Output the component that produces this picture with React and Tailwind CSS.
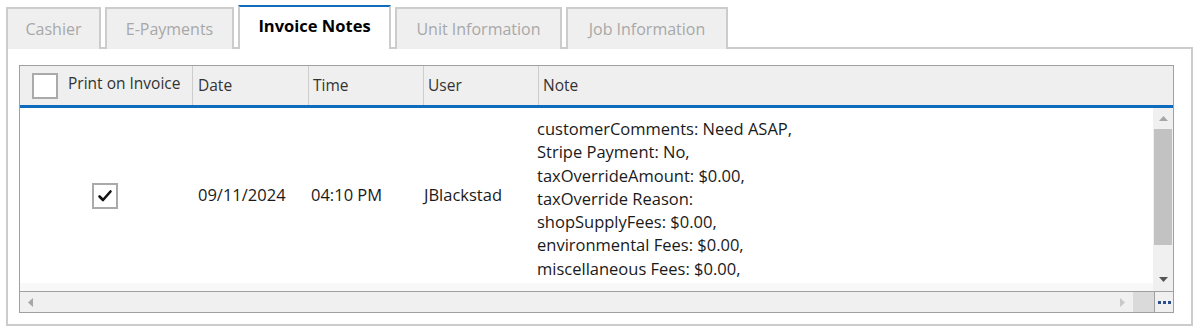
const tabs = [
  { label: 'Cashier', w: 'w-[95px]' },
  { label: 'E-Payments', w: 'w-[129px]' },
  { label: 'Invoice Notes', w: 'w-[153px]', active: true },
  { label: 'Unit Information', w: 'w-[167px]' },
  { label: 'Job Information', w: 'w-[162px]' },
]

const noteLines = [
  'customerComments: Need ASAP,',
  'Stripe Payment: No,',
  'taxOverrideAmount: $0.00,',
  'taxOverride Reason:',
  'shopSupplyFees: $0.00,',
  'environmental Fees: $0.00,',
  'miscellaneous Fees: $0.00,',
]

const Tab = ({ label, w, active }) => {
  if (active) {
    return (
      <div
        className={`${w} h-[44px] relative z-10 -mb-[2px] flex items-center justify-center pb-[4px] bg-white border-x-2 border-t-2 border-x-[#cccccc] border-t-[#0f6cbd] text-black font-bold text-[16.5px]`}
      >
        {label}
      </div>
    )
  }
  return (
    <div
      className={`${w} h-[42px] relative z-10 -mb-[2px] flex items-center justify-center bg-[#efefef] border-x-2 border-t-2 border-[#cccccc] text-[#a8a8a8] text-[16px]`}
    >
      {label}
    </div>
  )
}

const Box = ({ checked, className = '' }) => (
  <div className={`w-[26px] h-[26px] border-2 border-[#aaaaaa] bg-white flex items-center justify-center ${className}`}>
    {checked && (
      <svg width="16" height="14" viewBox="0 0 16 14">
        <path d="M2.5 7.5 L6 11 L13.5 2.5" fill="none" stroke="#111" strokeWidth="2.6" strokeLinecap="round" strokeLinejoin="round" />
      </svg>
    )}
  </div>
)

export default function App() {
  return (
    <div className="w-[1199px] h-[330px] bg-white pl-[6px] text-[#1a1a1a]" style={{ fontFamily: '"Open Sans", "Noto Sans", sans-serif' }}>
      {/* tab strip */}
      <div className="flex items-end gap-[4px] h-[47px]">
        {tabs.map(t => (
          <Tab key={t.label} {...t} />
        ))}
      </div>

      {/* tab page */}
      <div className="w-[1187px] h-[279px] border-2 border-[#cccccc] pt-[16px] pl-[11px] pr-[17px]">
        <div className="h-[248px] border border-[#a0a0a0] flex flex-col bg-[#f8f8f8]">
          {/* header */}
          <div className="h-[42px] shrink-0 flex bg-[#efefef] border-b-[3px] border-[#0f6cbd] text-[#333] text-[15.5px]">
            <div className="w-[173px] border-r border-[#cccccc] flex items-center pl-[12px] gap-[10px]">
              <Box className="mt-[1px]" />
              <span className="-mt-[3px]">Print on Invoice</span>
            </div>
            <div className="w-[116px] border-r border-[#cccccc] flex items-center pl-[5px]">Date</div>
            <div className="w-[115px] border-r border-[#cccccc] flex items-center pl-[4px]">Time</div>
            <div className="w-[115px] border-r border-[#cccccc] flex items-center pl-[4px]">User</div>
            <div className="flex-1 flex items-center pl-[4px]">Note</div>
          </div>

          {/* body */}
          <div className="flex-1 flex min-h-0">
            <div className="flex-1 flex flex-col">
              <div className="h-[175px] bg-white flex items-center text-[16.5px]">
                <div className="w-[173px] flex justify-center pr-[3px]">
                  <Box checked />
                </div>
                <div className="w-[116px] pl-[5px]">09/11/2024</div>
                <div className="w-[115px] pl-[2px]">04:10 PM</div>
                <div className="w-[115px] pl-[0px]">JBlackstad</div>
                <div className="flex-1 -ml-[2px] mt-[6px] leading-[23.3px]">
                  {noteLines.map(l => (
                    <div key={l}>{l}</div>
                  ))}
                </div>
              </div>
            </div>
            {/* vertical scrollbar */}
            <div className="w-[20px] bg-[#f0f0f0] flex flex-col items-center">
              <div className="h-[21px] flex items-center justify-center">
                <svg width="9" height="5" viewBox="0 0 9 5"><path d="M0 5 L4.5 0 L9 5 Z" fill="#a6a6a6" /></svg>
              </div>
              <div className="w-[18px] h-[116px] bg-[#c2c2c2]" />
              <div className="flex-1 flex items-end justify-center pb-[9px]">
                <svg width="9" height="5" viewBox="0 0 9 5"><path d="M0 0 L9 0 L4.5 5 Z" fill="#555" /></svg>
              </div>
            </div>
          </div>

          {/* horizontal scrollbar */}
          <div className="h-[21px] shrink-0 border-t border-[#a0a0a0] flex bg-[#f0f0f0]">
            <div className="flex-1 flex items-center justify-between pl-[8px] pr-[8px]">
              <svg width="5" height="9" viewBox="0 0 5 9"><path d="M5 0 L0 4.5 L5 9 Z" fill="#a6a6a6" /></svg>
              <svg width="5" height="9" viewBox="0 0 5 9"><path d="M0 0 L5 4.5 L0 9 Z" fill="#c8c8c8" /></svg>
            </div>
            <div className="w-[21px] bg-[#dadada]" />
            <div className="w-[19px] border-l border-[#a0a0a0] bg-[#f0f0f0] flex items-center justify-center gap-[2px]">
              <span className="w-[3px] h-[3px] bg-[#2a4f8a]" />
              <span className="w-[3px] h-[3px] bg-[#2a4f8a]" />
              <span className="w-[3px] h-[3px] bg-[#2a4f8a]" />
            </div>
          </div>
        </div>
      </div>
    </div>
  )
}
